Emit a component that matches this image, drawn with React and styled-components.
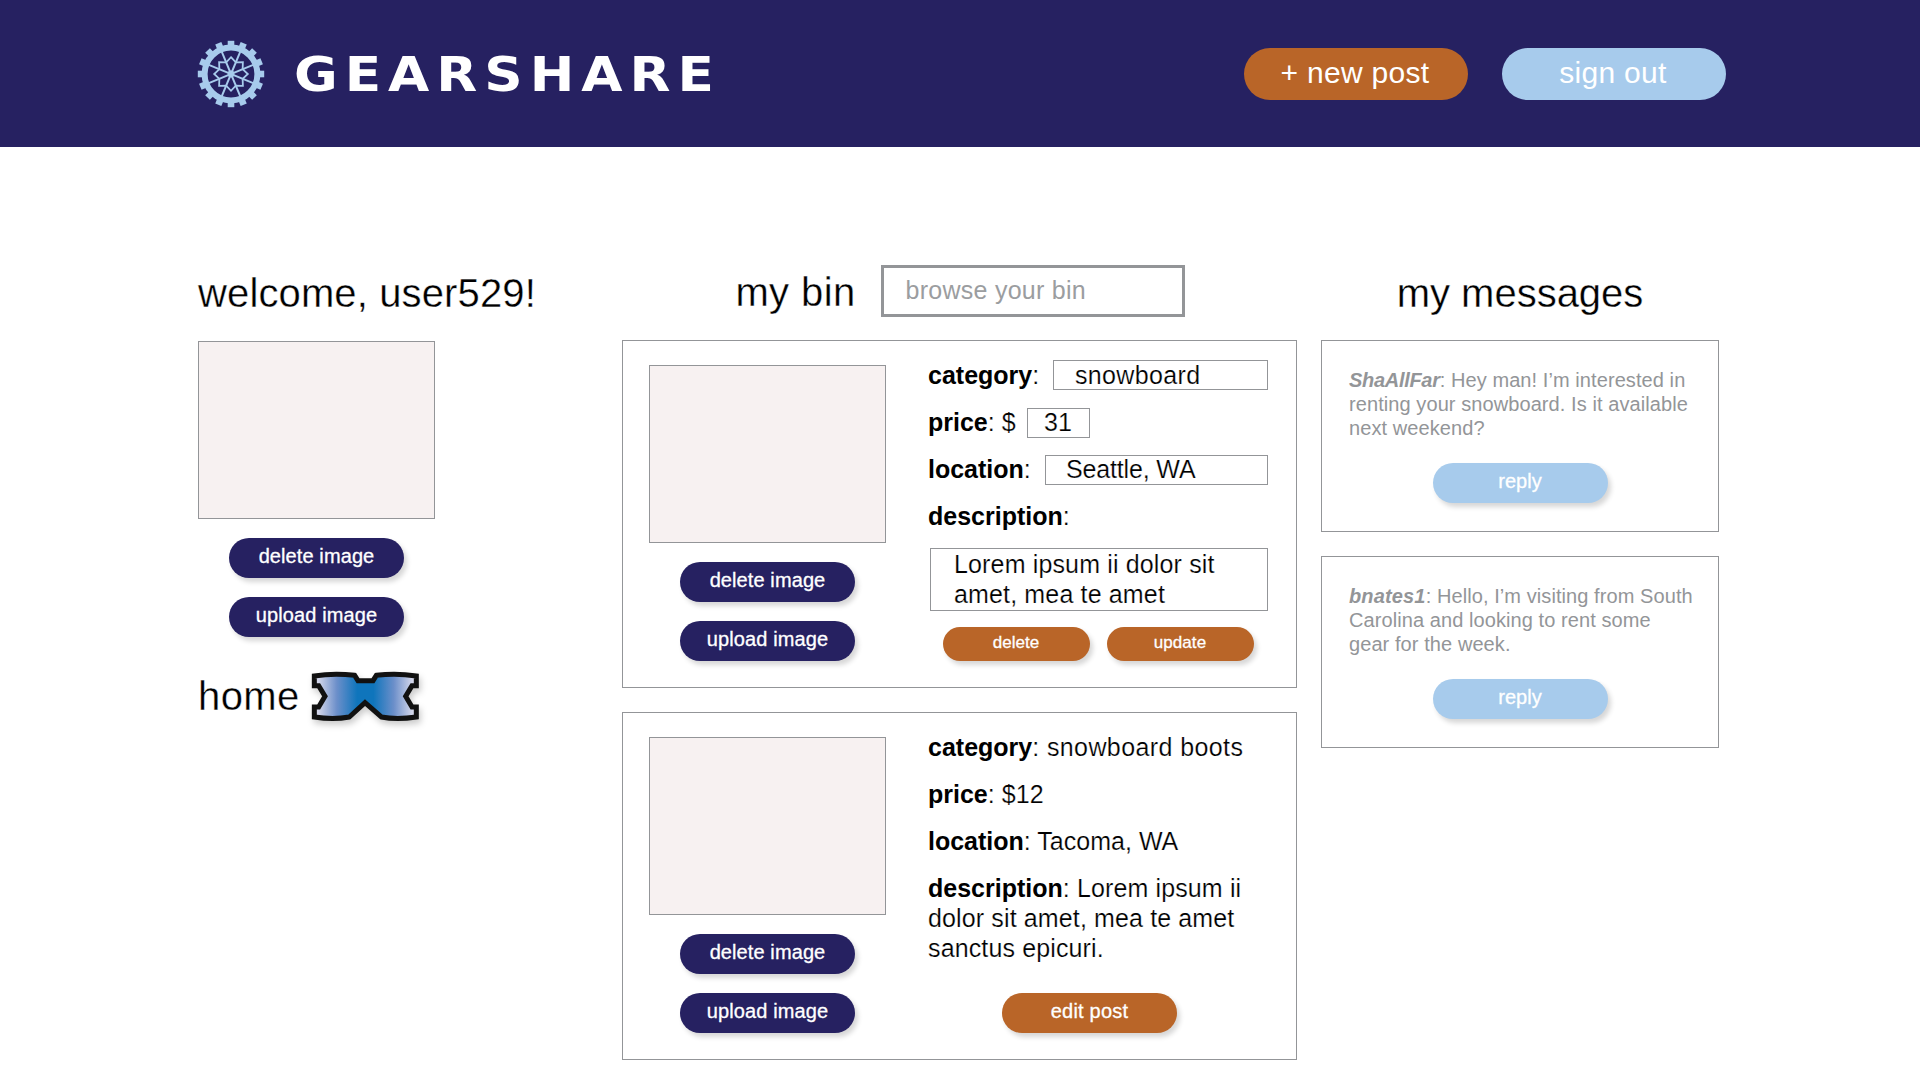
import React from "react";
import styled, { createGlobalStyle } from "styled-components";

const colors = {
  navy: "#262161",
  rust: "#b96528",
  sky: "#a7cbec",
  line: "#939598",
  blush: "#f7f1f1",
};

const GlobalStyle = createGlobalStyle`
  *, *::before, *::after { box-sizing: border-box; }
  body {
    margin: 0;
    background: #fff;
    color: #000;
    font-family: "Liberation Sans", Arial, Helvetica, sans-serif;
  }
`;

const Header = styled.header`
  display: flex;
  align-items: center;
  height: 147px;
  padding: 0 194px 0 197px;
  background: ${colors.navy};
`;

const Brand = styled.h1`
  margin: 0 auto 0 29px;
  font-family: "DejaVu Sans", sans-serif;
  font-size: 48px;
  font-weight: 700;
  line-height: 60px;
  letter-spacing: 6.3px;
  color: #fff;
  transform: scaleX(1.11);
  transform-origin: left center;
`;

const Button = styled.button`
  display: flex;
  align-items: center;
  justify-content: center;
  flex: none;
  width: 175px;
  height: 40.5px;
  padding: 0 0 3px;
  border: 0;
  border-radius: 21px;
  background: ${(p) => colors[p.$tone]};
  box-shadow: 3px 4px 5px rgba(0, 0, 0, 0.16);
  color: #fff;
  font-family: inherit;
  font-size: 20px;
  line-height: 24px;
  letter-spacing: ${(p) => p.$ls || 0}px;
  -webkit-text-stroke: 0.3px #fff;
`;

const NavButton = styled(Button)`
  width: 224px;
  height: 52px;
  margin-left: 34px;
  padding: 0 2px 2px 0;
  border-radius: 26px;
  box-shadow: none;
  font-size: 30px;
  line-height: 34px;
  -webkit-text-stroke: 0;
`;

const SmallButton = styled(Button)`
  width: 147px;
  height: 34px;
  padding-bottom: 2px;
  font-size: 17px;
  line-height: 20px;
`;

const Main = styled.main`
  display: grid;
  grid-template-columns: 400px 675px 398px;
  column-gap: 24px;
  padding: 118px 0 0 198px;
`;

const Column = styled.section`
  display: flex;
  flex-direction: column;
`;

const HeadingRow = styled.div`
  display: flex;
  align-items: center;
  justify-content: ${(p) => p.$justify || "flex-start"};
  height: 52px;
  padding-left: ${(p) => p.$pl || 0}px;
`;

const Heading = styled.h2`
  margin: ${(p) => p.$margin || 0};
  font-size: 40px;
  font-weight: 400;
  line-height: 40px;
  letter-spacing: ${(p) => p.$ls || 0}px;
  white-space: nowrap;
  -webkit-text-stroke: 0.35px #fff;
`;

const Search = styled.input`
  width: 304px;
  height: 52px;
  margin-left: 25px;
  padding: 0 0 2px 22px;
  border: 3px solid ${colors.line};
  border-radius: 0;
  outline: 0;
  font-family: inherit;
  font-size: 25px;
  letter-spacing: 0.25px;
  &::placeholder { color: #9b9da0; opacity: 1; }
`;

const Media = styled.div`
  display: flex;
  flex-direction: column;
  align-items: center;
  gap: 18.5px;
  width: 237px;
  margin-top: ${(p) => p.$top}px;
`;

const Picture = styled.div`
  width: 237px;
  height: 178px;
  border: 1px solid ${colors.line};
  background: ${colors.blush};
`;

const HomeLink = styled.a`
  display: flex;
  align-items: flex-start;
  margin-top: 32px;
  color: inherit;
  text-decoration: none;
`;

const PostCard = styled.article`
  display: flex;
  justify-content: space-between;
  height: 348px;
  margin-top: ${(p) => p.$top}px;
  padding: 19px 28px 0 26px;
  border: 1px solid ${colors.line};
`;

const Details = styled.div`
  display: flex;
  flex-direction: column;
  gap: 17px;
  width: 340px;
`;

const Field = styled.div`
  display: flex;
  align-items: center;
  justify-content: space-between;
  height: 30px;
`;

const Copy = styled.p`
  margin: 0;
  font-size: 25px;
  line-height: 30px;
  white-space: nowrap;
  letter-spacing: ${(p) => p.$ls || 0}px;
  -webkit-text-stroke: 0.2px #fff;
  b {
    letter-spacing: 0;
    -webkit-text-stroke: 0;
  }
`;

const Box = styled.div`
  width: ${(p) => p.$w}px;
  height: 30px;
  margin-top: ${(p) => p.$mt || 0}px;
  margin-right: ${(p) => p.$mr || 0}px;
  padding-left: ${(p) => p.$pad}px;
  border: 1px solid ${colors.line};
  font-size: 25px;
  line-height: ${(p) => (p.$mt ? 26 : 28)}px;
  white-space: nowrap;
  letter-spacing: ${(p) => p.$ls || 0}px;
  -webkit-text-stroke: 0.2px #fff;
`;

const TextArea = styled(Box)`
  height: 63px;
  margin-left: 2px;
  line-height: 30px;
`;

const Actions = styled.div`
  display: flex;
  justify-content: center;
  gap: 17px;
  margin-top: ${(p) => p.$top}px;
  padding-right: ${(p) => p.$pr || 0}px;
`;

const MessageCard = styled.article`
  display: flex;
  flex-direction: column;
  align-items: center;
  height: 192px;
  margin-top: ${(p) => p.$top}px;
  padding: 27px 0 0;
  border: 1px solid ${colors.line};
`;

const MessageText = styled.p`
  align-self: stretch;
  margin: 0 0 22.5px;
  padding-left: 27px;
  color: ${colors.line};
  font-size: 20px;
  line-height: 24px;
  letter-spacing: 0.08px;
`;

const Line = styled.span`
  display: block;
  white-space: nowrap;
`;

const Sender = styled.b`
  font-style: italic;
  letter-spacing: ${(p) => p.$ls}px;
`;

const Gear = styled.svg`
  flex: none;
  display: block;
`;

const Goggles = styled.svg`
  flex: none;
  display: block;
  margin: 1px 0 0 10px;
  filter: drop-shadow(2px 4px 3px rgba(0, 0, 0, 0.2));
`;

const TEETH = Array.from({ length: 16 }, (_, i) => i * 22.5);
const SPOKES = [22.5, 67.5, 112.5, 157.5];

// Eight-pointed rosette: alternating outer tips and inner corners.
const ROSETTE = Array.from({ length: 16 }, (_, i) => {
  const r = i % 2 ? 12.6 : 16.8;
  const a = (i * Math.PI) / 8;
  return `${(r * Math.sin(a)).toFixed(2)},${(-r * Math.cos(a)).toFixed(2)}`;
}).join(" ");

function GearLogo() {
  return (
    <Gear width="68" height="68" viewBox="-34 -34 68 68">
      <g fill={colors.sky}>
        {TEETH.map((a) => (
          <rect key={a} x="-3.3" y="-33.2" width="6.6" height="7" transform={`rotate(${a})`} />
        ))}
      </g>
      <g fill="none" stroke={colors.sky}>
        <circle r="26.4" strokeWidth="6" />
        {SPOKES.map((a) => (
          <line key={a} y1="-24" y2="24" strokeWidth="2" transform={`rotate(${a})`} />
        ))}
        <polygon points={ROSETTE} strokeWidth="1.8" />
      </g>
      <circle r="3.4" fill={colors.sky} />
    </Gear>
  );
}

function GogglesIcon() {
  return (
    <Goggles width="110" height="54" viewBox="390 450 330 162">
      <defs>
        <linearGradient id="lens" x1="0" x2="1" y1="0" y2="0">
          <stop offset="0.04" stopColor="#d3d6ea" />
          <stop offset="0.22" stopColor="#6c8fca" />
          <stop offset="0.42" stopColor="#0f75bc" />
          <stop offset="0.58" stopColor="#0f75bc" />
          <stop offset="0.78" stopColor="#6c8fca" />
          <stop offset="0.96" stopColor="#d3d6ea" />
        </linearGradient>
      </defs>
      <path
        d="M403 468 Q460 459 524 466 L534 482 H579 L589 466 Q650 459 709 468 V497 H696 L677 529 L696 561 H709 V591 Q650 600 604 591 L555 548 L508 591 Q460 600 403 591 V561 H416 L435 529 L416 497 H403 Z"
        fill="url(#lens)"
        stroke="#111"
        strokeWidth="15"
      />
    </Goggles>
  );
}

function ImageEditor({ top }) {
  return (
    <Media $top={top}>
      <Picture />
      <Button $tone="navy" $ls={0.1}>delete image</Button>
      <Button $tone="navy" $ls={0.12}>upload image</Button>
    </Media>
  );
}

const messages = [
  {
    from: "ShaAllFar",
    spacing: -0.3,
    top: 23,
    lines: [": Hey man! I’m interested in", "renting your snowboard. Is it available", "next weekend?"],
  },
  {
    from: "bnates1",
    spacing: 0.15,
    top: 24,
    lines: [": Hello, I’m visiting from South", "Carolina and looking to rent some", "gear for the week."],
  },
];

export default function App() {
  return (
    <>
      <GlobalStyle />
      <Header>
        <GearLogo />
        <Brand>GEARSHARE</Brand>
        <NavButton $tone="rust" $ls={0.3}>+ new post</NavButton>
        <NavButton $tone="sky" $ls={0.3}>sign out</NavButton>
      </Header>
      <Main>
        <Column>
          <HeadingRow>
            <Heading $margin="4px 0 0" $ls={0.13}>welcome, user529!</Heading>
          </HeadingRow>
          <ImageEditor top={24} />
          <HomeLink>
            <Heading $margin="7px 0 0" $ls={0.4}>home</Heading>
            <GogglesIcon />
          </HomeLink>
        </Column>

        <Column>
          <HeadingRow $justify="center" $pl={1}>
            <Heading $margin="2px 0 0" $ls={0.4}>my bin</Heading>
            <Search placeholder="browse your bin" />
          </HeadingRow>

          <PostCard $top={23}>
            <ImageEditor top={5} />
            <Details>
              <Field>
                <Copy><b>category</b>:</Copy>
                <Box $w={215} $pad={21} $ls={0.35}>snowboard</Box>
              </Field>
              <Field>
                <Copy><b>price</b>: $</Copy>
                <Box $w={63} $pad={16} $mr={178} $mt={2}>31</Box>
              </Field>
              <Field>
                <Copy><b>location</b>:</Copy>
                <Box $w={223} $pad={20} $ls={-0.15} $mt={2}>Seattle, WA</Box>
              </Field>
              <Field>
                <Copy><b>description</b>:</Copy>
              </Field>
              <TextArea $w={338} $pad={23} $ls={0.15}>
                Lorem ipsum ii dolor sit<br />amet, mea te amet
              </TextArea>
              <Actions $top={-1}>
                <SmallButton $tone="rust" $ls={0.05}>delete</SmallButton>
                <SmallButton $tone="rust" $ls={0.05}>update</SmallButton>
              </Actions>
            </Details>
          </PostCard>

          <PostCard $top={24}>
            <ImageEditor top={5} />
            <Details>
              <Copy $ls={0.4}><b>category</b>: snowboard boots</Copy>
              <Copy $ls={0.1}><b>price</b>: $12</Copy>
              <Copy $ls={0.02}><b>location</b>: Tacoma, WA</Copy>
              <Copy $ls={0.13}>
                <b>description</b>: Lorem ipsum ii<br />
                dolor sit amet, mea te amet<br />
                sanctus epicuri.
              </Copy>
              <Actions $top={12.5} $pr={17}>
                <Button $tone="rust" $ls={0.2}>edit post</Button>
              </Actions>
            </Details>
          </PostCard>
        </Column>

        <Column>
          <HeadingRow $justify="center">
            <Heading $margin="4px 0 0">my messages</Heading>
          </HeadingRow>
          {messages.map((m) => (
            <MessageCard key={m.from} $top={m.top}>
              <MessageText>
                {m.lines.map((line, i) => (
                  <Line key={line}>
                    {i === 0 && <Sender $ls={m.spacing}>{m.from}</Sender>}
                    {line}
                  </Line>
                ))}
              </MessageText>
              <Button $tone="sky">reply</Button>
            </MessageCard>
          ))}
        </Column>
      </Main>
    </>
  );
}
